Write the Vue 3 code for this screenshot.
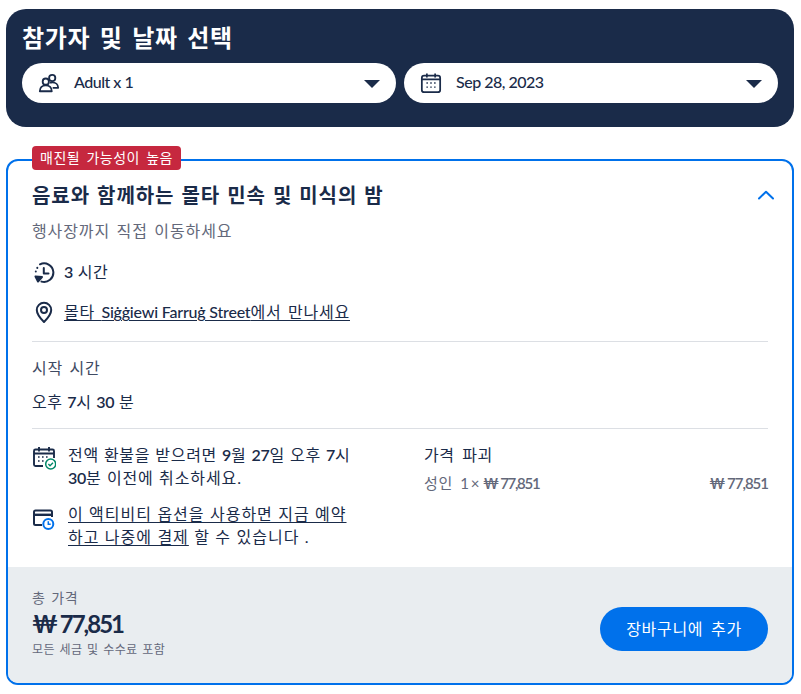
<script setup>
const selects = [
  { key: 'people', label: 'Adult x 1' },
  { key: 'date', label: 'Sep 28, 2023' },
]
</script>

<template>
  <div class="page">
    <section class="picker">
      <h2 class="picker-title">참가자 및 날짜 선택</h2>
      <div class="selects">
        <div v-for="s in selects" :key="s.key" class="select">
          <svg v-if="s.key === 'people'" class="sel-icon" viewBox="0 0 24 24" fill="none" stroke="#1a2b49" stroke-width="2">
            <circle cx="15.500" cy="6.500" r="3.400" />
            <circle cx="8.500" cy="10.500" r="3.400" />
            <path d="M2 21c0-3.800 2.600-6.500 6.500-6.500S15 17.200 15 21z" stroke-linejoin="round" />
            <path d="M13.200 11.800c.7-.3 1.500-.4 2.300-.4 3.800 0 6.500 2.400 6.500 5.900h-6" stroke-linejoin="round" />
          </svg>
          <svg v-else class="sel-icon" viewBox="0 0 24 24" fill="none" stroke="#1a2b49" stroke-width="1.900">
            <rect x="2" y="4" width="20" height="18" rx="2.500" />
            <path d="M7.500 1.500v4.500M16.500 1.500v4.500M2 8h20" />
            <path d="M7 12h1.600M11.200 12h1.600M15.400 12h1.600M7 16.500h1.600M11.200 16.500h1.600M15.400 16.500h1.600" stroke-width="1.600" />
          </svg>
          <span class="sel-label">{{ s.label }}</span>
          <span class="caret"></span>
        </div>
      </div>
    </section>

    <section class="card">
      <span class="badge">매진될 가능성이 높음</span>
      <div class="body">
        <div class="head">
          <h3 class="title">음료와 함께하는 몰타 민속 및 미식의 밤</h3>
          <svg class="chev" viewBox="0 0 18 10" fill="none" stroke="#0071eb" stroke-width="2" stroke-linecap="round" stroke-linejoin="round">
            <path d="M2 8.500 9 1.800l7 6.700" />
          </svg>
        </div>
        <p class="sub">행사장까지 직접 이동하세요</p>
        <div class="info duration">
          <svg class="info-icon" viewBox="0 0 24 24" fill="none" stroke="#1a2b49" stroke-width="2" stroke-linecap="round" stroke-linejoin="round">
            <path d="M8 4.300A9.300 9.300 0 1 1 9.500 21.600" />
            <path d="M11.800 8v5.500h4.700" />
            <path d="M3.800 11.500v.1M5.300 7.800v.1" />
            <path d="M3.500 16.500 10 17l-4 4.500z" fill="#1a2b49" />
          </svg>
          <span><span class="num">3</span> 시간</span>
        </div>
        <div class="info place">
          <svg class="info-icon" viewBox="0 0 24 24" fill="none" stroke="#1a2b49" stroke-width="2" stroke-linejoin="round">
            <path d="M12 22C7.500 17.500 4.800 14 4.800 10a7.200 7.200 0 0 1 14.400 0c0 4-2.700 7.500-7.200 12z" />
            <circle cx="12" cy="10" r="3" />
          </svg>
          <a class="link">몰타 <span class="latin">Siġġiewi Farruġ Street</span>에서 만나세요</a>
        </div>
        <hr class="rule" />
        <p class="start-label">시작 시간</p>
        <p class="start-time">오후 <span class="num">7</span>시 <span class="num">30</span> 분</p>
        <hr class="rule second" />
        <div class="columns">
          <div class="notes">
            <div class="note refund">
              <svg class="note-icon first" viewBox="0 0 24 24" fill="none">
                <g stroke="#1a2b49" stroke-width="1.900">
                  <path d="M11 20H3.500A1.500 1.500 0 0 1 2 18.500V5A1.500 1.500 0 0 1 3.500 3.500h17A1.500 1.500 0 0 1 22 5v7" />
                  <path d="M7 1v4.500M17 1v4.500M2 7.500h20" />
                  <path d="M6 11h1.600M10 11h1.600M14 11h1.600M6 15h1.600M10 15h1.600" stroke-width="1.500" />
                </g>
                <circle cx="18.700" cy="18" r="5" fill="#fff" stroke="#008768" stroke-width="1.500" />
                <path d="m16.400 18.100 1.600 1.600 3-3" stroke="#008768" stroke-width="1.400" />
              </svg>
              <p>전액 환불을 받으려면 <span class="num">9</span>월 <span class="num">27</span>일 오후 <span class="num">7</span>시<br /><span class="line-b"><span class="num">30</span>분 이전에 취소하세요.</span></p>
            </div>
            <div class="note later">
              <svg class="note-icon second-icon" viewBox="0 0 24 24" fill="none">
                <g stroke="#1a2b49" stroke-width="2">
                  <path d="M10 17H3.500A1.500 1.500 0 0 1 2 15.500V4A1.500 1.500 0 0 1 3.500 2.500h15A1.500 1.500 0 0 1 20 4v5" />
                  <path d="M2 6.800h18" stroke-width="2.400" />
                </g>
                <circle cx="16.300" cy="16" r="5" fill="#fff" stroke="#0071eb" stroke-width="2" />
                <path d="M16.300 13.300v3h2.400" stroke="#0071eb" stroke-width="1.500" />
              </svg>
              <p><a class="link">이 액티비티 옵션을 사용하면 지금 예약<br />하고 나중에 결제</a> 할 수 있습니다 .</p>
            </div>
          </div>
          <div class="breakdown">
            <p class="bd-title">가격 파괴</p>
            <div class="bd-row">
              <span>성인 <span class="amt qty">1 ×</span> <b class="amt inner">₩ 77,851</b></span>
              <b class="amt">₩ 77,851</b>
            </div>
          </div>
        </div>
      </div>
      <footer class="total">
        <div class="total-text">
          <span class="total-label">총 가격</span>
          <strong class="total-price">₩ 77,851</strong>
          <span class="total-note">모든 세금 및 수수료 포함</span>
        </div>
        <button class="cart">장바구니에 추가</button>
      </footer>
    </section>
  </div>
</template>

<style scoped>
.page {
  width: 801px;
  height: 694px;
  box-sizing: border-box;
  padding: 9px 7px 0 6px;
  font-family: Lato, "Noto Sans CJK KR", sans-serif;
  color: #1a2b49;
  background: #fff;
  overflow: hidden;
  letter-spacing: .6px;
  word-spacing: 2.800px;
}
p, h2, h3 { margin: 0; }
.num { font-weight: 600; letter-spacing: -.3px; word-spacing: 0; }
.picker {
  height: 118px;
  box-sizing: border-box;
  background: #1a2b49;
  border-radius: 20px;
  padding: 13px 16px;
}
.picker-title {
  font-size: 24px;
  line-height: 32px;
  font-weight: 700;
  color: #fff;
  margin-bottom: 9px;
  letter-spacing: .7px;
  word-spacing: 3px;
}
.selects { display: flex; gap: 8px; }
.select {
  flex: 1;
  height: 40px;
  background: #fff;
  border-radius: 20px;
  display: flex;
  align-items: center;
  padding: 0 16px;
  font-size: 16px;
  font-weight: 500;
  letter-spacing: -.5px;
  word-spacing: 0;
}
.sel-icon { width: 22px; height: 22px; margin-right: 14px; flex: none; }
.sel-label { flex: 1; position: relative; top: -2px; }
.caret {
  width: 0;
  height: 0;
  border-left: 8px solid transparent;
  border-right: 8px solid transparent;
  border-top: 8px solid #1a2b49;
  margin-top: 1px;
}
.card {
  position: relative;
  margin-top: 32px;
  height: 526px;
  box-sizing: border-box;
  border: 2px solid #0071eb;
  border-radius: 12px;
  display: flex;
  flex-direction: column;
}
.badge {
  position: absolute;
  left: 24px;
  top: -15px;
  height: 24px;
  line-height: 23px;
  padding: 0 8px;
  background: #c6283f;
  color: #fff;
  font-size: 14px;
  border-radius: 4px;
  letter-spacing: .5px;
  word-spacing: 2.200px;
}
.body { flex: 1; padding: 19px 24px 0; }
.head { display: flex; justify-content: space-between; align-items: center; height: 30px; }
.title { font-size: 20px; font-weight: 700; line-height: 30px; letter-spacing: .95px; word-spacing: 1.200px; }
.chev { width: 18px; height: 10px; margin-right: -7px; }
.sub { font-size: 16px; line-height: 24px; color: #63687a; margin-top: 9px; letter-spacing: .9px; word-spacing: 1.500px; }
.info { display: flex; align-items: center; font-size: 16px; line-height: 24px; word-spacing: 0; }
.duration { margin-top: 17px; }
.place { margin-top: 16px; letter-spacing: .8px; word-spacing: 1.500px; }
.info-icon { width: 24px; height: 24px; margin-right: 8px; flex: none; }
.link { text-decoration: underline; text-underline-offset: 2px; color: #1a2b49; }
.latin { letter-spacing: -.2px; word-spacing: 0; font-weight: 500; }
.rule { border: 0; border-top: 1px solid #dcdfe4; margin: 17px 0 0; }
.start-label { font-size: 16px; line-height: 24px; margin-top: 14px; color: #3f4b63; letter-spacing: .8px; word-spacing: 1.500px; }
.start-time { font-size: 16px; line-height: 24px; margin-top: 10px; word-spacing: 0; }
.second { margin-top: 14px; }
.columns { display: flex; margin-top: 14px; }
.notes { width: 392px; flex: none; }
.note { display: flex; font-size: 16px; line-height: 23px; }
.note + .note { margin-top: 13px; }
.note p { white-space: nowrap; }
.refund { letter-spacing: .7px; word-spacing: .3px; }
.line-b { letter-spacing: .9px; }
.later { letter-spacing: 1px; word-spacing: .3px; }
.note-icon { width: 24px; height: 24px; margin-right: 12px; flex: none; }
.note-icon.first { margin-top: 3px; }
.note-icon.second-icon { margin-top: 6px; }
.breakdown { flex: 1; font-size: 16px; line-height: 23px; }
.bd-row {
  display: flex;
  justify-content: space-between;
  margin-top: 7px;
  font-size: 15px;
  line-height: 20px;
  color: #63687a;
  word-spacing: 0;
}
.amt { letter-spacing: -1px; word-spacing: 0; font-weight: 600; }
.amt.inner { letter-spacing: -1.300px; }
span.amt { font-weight: 400; letter-spacing: -1px; }
.qty { margin-left: 3px; }
.total {
  height: 116px;
  flex: none;
  box-sizing: border-box;
  background: #e9edf0;
  border-radius: 0 0 10px 10px;
  display: flex;
  align-items: flex-start;
  justify-content: space-between;
  padding: 21px 24px 0;
}
.total-text { display: flex; flex-direction: column; }
.total-label { font-size: 14px; line-height: 20px; color: #63687a; word-spacing: 1.500px; }
.total-price { font-size: 24px; line-height: 32px; font-weight: 700; letter-spacing: -2px; word-spacing: 0; }
.total-note { font-size: 12px; line-height: 20px; color: #63687a; letter-spacing: .4px; word-spacing: 1.200px; }
.cart {
  width: 168px;
  height: 44px;
  margin-top: 19px;
  border: 0;
  border-radius: 22px;
  background: #0071eb;
  color: #fff;
  font: 16px Lato, "Noto Sans CJK KR", sans-serif;
  letter-spacing: .7px;
  word-spacing: 3px;
  padding: 0 0 2px;
}
</style>
